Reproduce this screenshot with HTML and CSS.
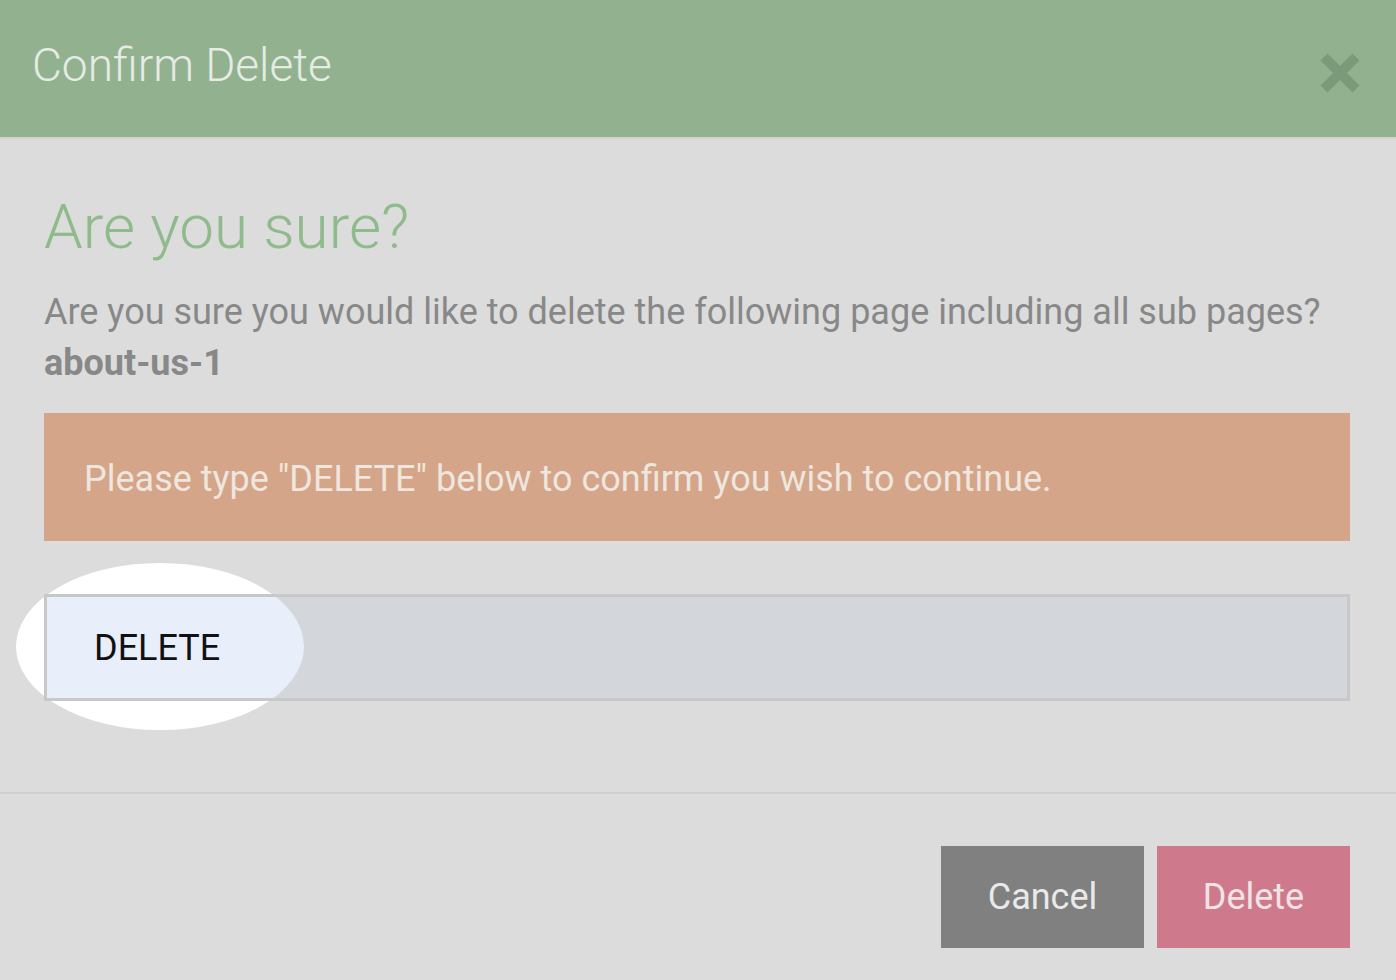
FILE: index.html
```html
<!DOCTYPE html>
<html>
<head>
<meta charset="utf-8">
<link rel="stylesheet" href="styles.css">
</head>
<body>
<div class="modal">
  <div class="modal-header">
    <h1 class="modal-title">Confirm Delete</h1>
    <button class="close" aria-label="Close">
      <svg width="44" height="44" viewBox="0 0 44 44"><path d="M6 6 L38 38 M38 6 L6 38" stroke="#7b9a79" stroke-width="10" stroke-linecap="butt"/></svg>
    </button>
  </div>
  <div class="modal-body">
    <h2 class="sure">Are you sure?</h2>
    <p class="question">Are you sure you would like to delete the following page including all sub pages?<br><strong>about-us-1</strong></p>
    <div class="alert">Please type "DELETE" below to confirm you wish to continue.</div>
    <div class="field">
      <div class="spot"></div>
      <div class="input">
        <div class="spot-inner"></div>
        <span class="value">DELETE</span>
      </div>
    </div>
  </div>
  <div class="modal-footer">
    <button class="btn btn-cancel">Cancel</button>
    <button class="btn btn-delete">Delete</button>
  </div>
</div>
</body>
</html>
```

FILE: styles.css
```css
* { box-sizing: border-box; }
html, body { margin: 0; padding: 0; }
body {
  background: #dcdcdc;
  font-family: Roboto, "Liberation Sans", sans-serif;
  width: 1396px;
  height: 980px;
  overflow: hidden;
}
.modal { display: flex; flex-direction: column; }
.modal-header {
  height: 139px;
  background: #92b28f;
  border-bottom: 2px solid #d2d2d2;
  display: flex;
  align-items: center;
  justify-content: space-between;
  padding: 0 34px 0 32px;
}
.modal-title {
  margin: 0 0 8px 0;
  font-weight: 300;
  font-size: 46px;
  color: #e6ebe5;
}
.close {
  background: none;
  border: 0;
  padding: 0;
  width: 44px;
  height: 44px;
  margin-top: 8px;
}
.close svg { display: block; }
.modal-body { padding: 52px 46px 0 44px; }
.sure {
  margin: 0;
  font-weight: 300;
  font-size: 62px;
  line-height: 72px;
  color: #8fbb8c;
}
.question {
  margin: 24px 0 0 0;
  font-size: 36px;
  line-height: 51px;
  color: #888888;
}
.question strong { font-weight: 700; }
.alert {
  margin-top: 24px;
  height: 128px;
  background: #d4a588;
  color: #eee6df;
  font-size: 36px;
  display: flex;
  align-items: center;
  padding: 4px 40px 0;
}
.field {
  position: relative;
  margin-top: 53px;
  height: 107px;
}
.spot {
  position: absolute;
  left: -28px;
  top: -31px;
  width: 288px;
  height: 167px;
  border-radius: 50%;
  background: #fff;
}
.input {
  position: relative;
  height: 107px;
  border: 3px solid #c8c8c8;
  background: #d3d6db;
  overflow: hidden;
  display: flex;
  align-items: center;
  padding-left: 47px;
}
.spot-inner {
  position: absolute;
  left: -31px;
  top: -34px;
  width: 288px;
  height: 167px;
  border-radius: 50%;
  background: #e8eefa;
}
.value {
  position: relative;
  font-size: 36px;
  color: #111;
}
.modal-footer {
  margin-top: 91px;
  border-top: 2px solid #d0d0d0;
  display: flex;
  justify-content: flex-end;
  gap: 13px;
  padding: 52px 46px 0 0;
}
.btn {
  border: 0;
  height: 102px;
  font-family: Roboto, "Liberation Sans", sans-serif;
  font-size: 36px;
  color: #e9e9e9;
}
.btn-cancel { width: 203px; background: #808080; }
.btn-delete { width: 193px; background: #cf7a8c; color: #efe3e6; }
```
